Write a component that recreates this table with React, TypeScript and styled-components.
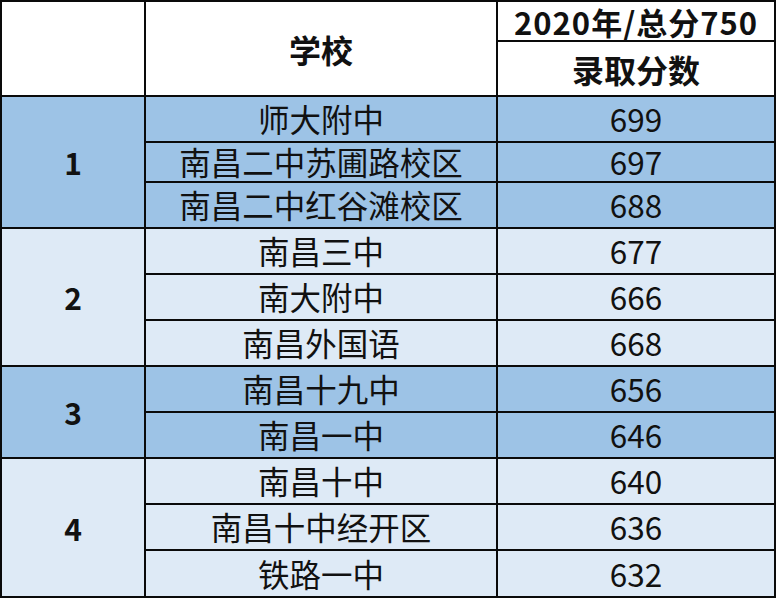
import { Fragment } from "react";
import styled, { createGlobalStyle } from "styled-components";

const GlobalStyle = createGlobalStyle`
  html, body {
    margin: 0;
    padding: 0;
    background: #ffffff;
  }
`;

type Tone = "dark" | "light" | "white";

const tones: Record<Tone, string> = {
  dark: "#9dc3e6",
  light: "#deeaf6",
  white: "#ffffff",
};

const Sheet = styled.div`
  width: 776px;
  box-sizing: border-box;
  display: grid;
  grid-template-columns: 142px 350px 276px;
  grid-template-rows: 38px 53px 44px 38px 44px 44px 44px 44px 44px 44px 44px 44px 45px;
  gap: 2px;
  padding: 2px;
  background: #0a0a0a;
  font-family: "Noto Sans CJK SC", "Noto Sans", sans-serif;
  color: #111111;
`;

const Cell = styled.div<{ $tone: Tone; $span?: number; $bold?: boolean; $size?: number }>`
  grid-row: ${(p) => (p.$span ? `span ${p.$span}` : "auto")};
  background: ${(p) => tones[p.$tone]};
  display: flex;
  align-items: center;
  justify-content: center;
  font-size: ${(p) => p.$size ?? 31.5}px;
  font-weight: ${(p) => (p.$bold ? 700 : 400)};
  line-height: 1;
  white-space: nowrap;
`;

const YearHead = styled(Cell)`
  letter-spacing: 1px;
`;

const groups: { rank: string; tone: Tone; rows: [string, string][] }[] = [
  {
    rank: "1",
    tone: "dark",
    rows: [
      ["师大附中", "699"],
      ["南昌二中苏圃路校区", "697"],
      ["南昌二中红谷滩校区", "688"],
    ],
  },
  {
    rank: "2",
    tone: "light",
    rows: [
      ["南昌三中", "677"],
      ["南大附中", "666"],
      ["南昌外国语", "668"],
    ],
  },
  {
    rank: "3",
    tone: "dark",
    rows: [
      ["南昌十九中", "656"],
      ["南昌一中", "646"],
    ],
  },
  {
    rank: "4",
    tone: "light",
    rows: [
      ["南昌十中", "640"],
      ["南昌十中经开区", "636"],
      ["铁路一中", "632"],
    ],
  },
];

export default function App() {
  return (
    <>
      <GlobalStyle />
      <Sheet>
        <Cell $tone="white" $span={2} />
        <Cell $tone="white" $span={2} $bold $size={32}>
          学校
        </Cell>
        <YearHead $tone="white" $bold $size={31}>
          2020年/总分750
        </YearHead>
        <Cell $tone="white" $bold $size={32}>
          录取分数
        </Cell>
        {groups.map((g) =>
          g.rows.map(([school, score], i) => (
            <Fragment key={school}>
              {i === 0 && (
                <Cell $tone={g.tone} $span={g.rows.length} $bold $size={30}>
                  {g.rank}
                </Cell>
              )}
              <Cell $tone={g.tone}>{school}</Cell>
              <Cell $tone={g.tone}>{score}</Cell>
            </Fragment>
          ))
        )}
      </Sheet>
    </>
  );
}
